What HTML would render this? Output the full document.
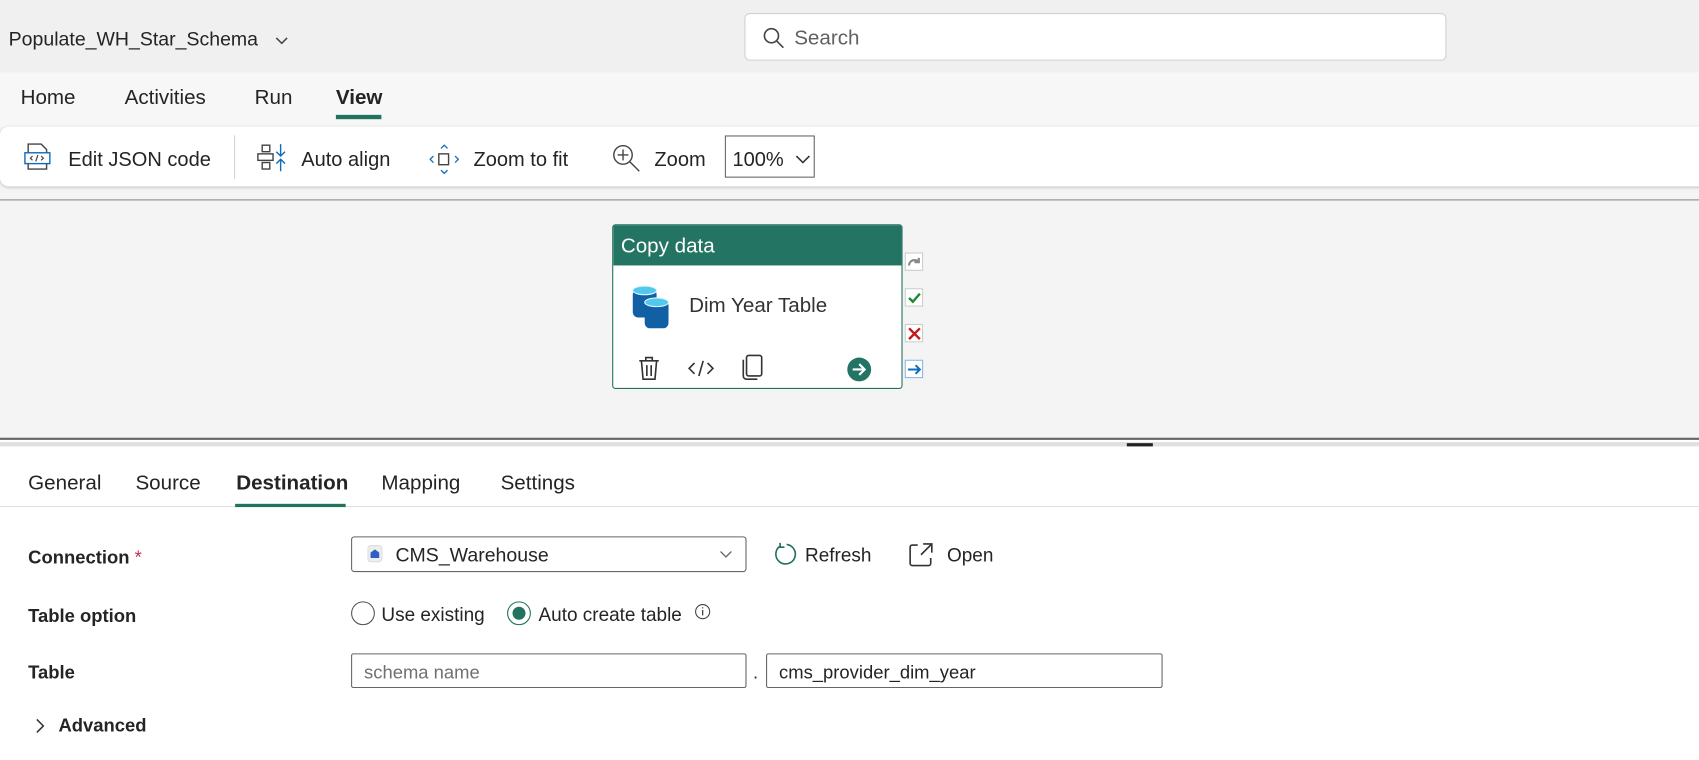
<!DOCTYPE html>
<html><head><meta charset="utf-8"><style>
*{box-sizing:border-box;margin:0;padding:0}
body{width:1699px;height:759px;overflow:hidden;font-family:"Segoe UI","Liberation Sans",sans-serif;color:#242424;background:#fff;position:relative}
#w{position:absolute;left:0;top:0;width:1568px;height:701px;transform:scale(1.0835);transform-origin:0 0}
.a{position:absolute}
.t{white-space:nowrap;margin-top:2px}
</style></head><body><div id="w">
<div class="a" style="left:0;top:0;width:1699px;height:117px;background:#f0f0f0"></div>
<div class="a" style="left:0;top:67px;width:1699px;height:50px;background:#f7f7f7"></div>
<div class="a" style="left:0;top:117px;width:1699px;height:288px;background:#f4f4f4"></div>
<div class="a" style="left:0;top:184px;width:1699px;height:1px;background:#8a8a8a"></div>
<div class="a t" style="left:8px;top:24px;font-size:18px">Populate_WH_Star_Schema</div>
<svg class="a" style="left:253px;top:32px" width="14" height="10"><path d="M2 3l5 5 5-5" fill="none" stroke="#444" stroke-width="1.4"/></svg>
<div class="a" style="left:687px;top:12px;width:648px;height:44px;background:#fff;border:1px solid #d1d1d1;border-radius:5px"></div>
<svg class="a" style="left:704px;top:25px" width="20" height="20"><circle cx="8" cy="8" r="6.5" fill="none" stroke="#444" stroke-width="1.5"/><path d="M13 13l6 6" stroke="#444" stroke-width="1.5"/></svg>
<div class="a t" style="left:733px;top:23px;font-size:19px;color:#616161">Search</div>
<div class="a t" style="left:19px;top:78px;font-size:19px">Home</div>
<div class="a t" style="left:115px;top:78px;font-size:19px">Activities</div>
<div class="a t" style="left:235px;top:78px;font-size:19px">Run</div>
<div class="a t" style="left:310px;top:78px;font-size:19px;font-weight:bold">View</div>
<div class="a" style="left:310px;top:106px;width:42px;height:4px;background:#217360"></div>
<div class="a" style="left:0;top:117px;width:1699px;height:55px;background:#fff;border-radius:8px;box-shadow:0 1px 3px rgba(0,0,0,.2)"></div>
<svg class="a" style="left:22px;top:131px" width="26" height="28"><path d="M4 2h12l5 5v18H4z" fill="none" stroke="#444" stroke-width="1.3"/><rect x="1" y="10" width="23" height="10" fill="#fff" stroke="#0f6cbd" stroke-width="1.3"/><path d="M8 13l-2 2 2 2M16 13l2 2-2 2M13 12l-2 6" fill="none" stroke="#444" stroke-width="1.1"/></svg>
<div class="a t" style="left:63px;top:134px;font-size:18.5px">Edit JSON code</div>
<div class="a" style="left:216px;top:125px;width:1px;height:40px;background:#d1d1d1"></div>
<svg class="a" style="left:236px;top:132px" width="30" height="28"><rect x="6" y="2" width="7" height="6" fill="none" stroke="#444" stroke-width="1.3"/><rect x="2" y="10" width="14" height="6" fill="none" stroke="#444" stroke-width="1.3"/><rect x="6" y="18" width="7" height="6" fill="none" stroke="#444" stroke-width="1.3"/><path d="M23 1v11M19 8l4 4 4-4M23 26V15M19 19l4-4 4 4" fill="none" stroke="#0f6cbd" stroke-width="1.3"/></svg>
<div class="a t" style="left:278px;top:134px;font-size:18.5px">Auto align</div>
<svg class="a" style="left:396px;top:133px" width="28" height="28"><rect x="9" y="9" width="9" height="10" fill="none" stroke="#444" stroke-width="1.3"/><path d="M11 4l3-3 3 3M11 24l3 3 3-3M4 11l-3 3 3 3M24 11l3 3-3 3" fill="none" stroke="#0f6cbd" stroke-width="1.2"/></svg>
<div class="a t" style="left:437px;top:134px;font-size:18.5px">Zoom to fit</div>
<svg class="a" style="left:564px;top:132px" width="28" height="28"><circle cx="11" cy="11" r="8.5" fill="none" stroke="#444" stroke-width="1.3"/><path d="M11 6v10M6 11h10M17 17l9 9" stroke="#444" stroke-width="1.3"/></svg>
<div class="a t" style="left:604px;top:134px;font-size:18.5px">Zoom</div>
<div class="a" style="left:669px;top:125px;width:83px;height:39px;border:1px solid #666;background:#fff"></div>
<div class="a t" style="left:676px;top:134px;font-size:18.5px">100%</div>
<svg class="a" style="left:734px;top:142px" width="14" height="10"><path d="M1 2l6 6 6-6" fill="none" stroke="#333" stroke-width="1.5"/></svg>
<div class="a" style="left:565px;top:207px;width:268px;height:152px;background:#fff;border:1px solid #217360;border-radius:3px;overflow:hidden">
<div style="height:37px;background:#237462;color:#fff;font-size:19px;padding:9px 7px 0">Copy data</div>
</div>
<svg class="a" style="left:583px;top:263px" width="38" height="42"><rect x="1" y="4" width="22" height="26" rx="5" fill="#1160a6"/><ellipse cx="12" cy="5" rx="11" ry="4" fill="#52c8ee" stroke="#e0f4fb"/><rect x="12" y="14" width="22" height="26" rx="5" fill="#1160a6"/><ellipse cx="23" cy="16" rx="11" ry="4" fill="#52c8ee" stroke="#e0f4fb"/></svg>
<div class="a t" style="left:636px;top:270px;font-size:19px;color:#333">Dim Year Table</div>
<svg class="a" style="left:588px;top:328px" width="22" height="24"><path d="M2 5h18M8 5V2h6v3M4 5l1.5 17h11L18 5M9 9v10M13 9v10" fill="none" stroke="#333" stroke-width="1.5"/></svg>
<svg class="a" style="left:635px;top:330px" width="24" height="20"><path d="M6 5L1 10l5 5M18 5l5 5-5 5M14 3l-4 14" fill="none" stroke="#333" stroke-width="1.5"/></svg>
<svg class="a" style="left:683px;top:327px" width="22" height="25"><rect x="6" y="1" width="14" height="19" rx="2" fill="none" stroke="#333" stroke-width="1.5"/><path d="M3 5v15a3 3 0 0 0 3 3h10" fill="none" stroke="#333" stroke-width="1.5"/></svg>
<svg class="a" style="left:781px;top:329px" width="24" height="24"><circle cx="12" cy="12" r="11" fill="#237462"/><path d="M6 12h11M12 7l5 5-5 5" fill="none" stroke="#fff" stroke-width="2"/></svg>
<div class="a" style="left:835px;top:233px;width:17px;height:17px;border:1px solid #ccc;background:#fff"></div>
<svg class="a" style="left:836px;top:234px" width="16" height="16"><path d="M3 11a5 5 0 0 1 9-3M12 4v4H8" fill="none" stroke="#888" stroke-width="2"/></svg>
<div class="a" style="left:835px;top:266px;width:17px;height:17px;border:1px solid #ccc;background:#fff"></div>
<svg class="a" style="left:836px;top:267px" width="16" height="16"><path d="M3 8l3.5 3.5L13 4" fill="none" stroke="#1c8a2c" stroke-width="2.2"/></svg>
<div class="a" style="left:835px;top:299px;width:17px;height:17px;border:1px solid #ccc;background:#fff"></div>
<svg class="a" style="left:836px;top:300px" width="16" height="16"><path d="M3 3l10 10M13 3L3 13" stroke="#c0181c" stroke-width="2.2"/></svg>
<div class="a" style="left:835px;top:332px;width:17px;height:17px;border:1px solid #8ab6e6;background:#fff"></div>
<svg class="a" style="left:836px;top:333px" width="16" height="16"><path d="M2 8h11M9 4l4 4-4 4" fill="none" stroke="#0f6cbd" stroke-width="1.8"/></svg>
<div class="a" style="left:0;top:404px;width:1699px;height:2px;background:#666"></div>
<div class="a" style="left:0;top:408px;width:1699px;height:4px;background:#e0e0e0"></div>
<div class="a" style="left:1040px;top:409px;width:24px;height:3px;background:#222"></div>
<div class="a t" style="left:26px;top:434px;font-size:19px">General</div>
<div class="a t" style="left:125px;top:434px;font-size:19px">Source</div>
<div class="a t" style="left:218px;top:434px;font-size:19px;font-weight:bold">Destination</div>
<div class="a t" style="left:352px;top:434px;font-size:19px">Mapping</div>
<div class="a t" style="left:462px;top:434px;font-size:19px">Settings</div>
<div class="a" style="left:0;top:467px;width:1699px;height:1px;background:#e0e0e0"></div>
<div class="a" style="left:217px;top:465px;width:102px;height:3px;background:#217360"></div>
<div class="a t" style="left:26px;top:503px;font-size:17px;font-weight:bold">Connection <span style="color:#c4314b;font-weight:normal">*</span></div>
<div class="a" style="left:324px;top:495px;width:365px;height:33px;border:1px solid #666;border-radius:3px"></div>
<svg class="a" style="left:339px;top:503px" width="14" height="16"><rect x="0.5" y="0.5" width="13" height="15" rx="3" fill="#eee" stroke="#ddd"/><path d="M3 12V7l4-3 4 3v5z" fill="#2f5fc6"/></svg>
<div class="a t" style="left:365px;top:500px;font-size:18px">CMS_Warehouse</div>
<svg class="a" style="left:664px;top:508px" width="12" height="8"><path d="M1 1l5 5 5-5" fill="none" stroke="#666" stroke-width="1.2"/></svg>
<svg class="a" style="left:713px;top:500px" width="24" height="24"><path d="M7 4a9 9 0 1 0 6-1.5M7 1v4h4" fill="none" stroke="#1f6f63" stroke-width="1.5"/></svg>
<div class="a t" style="left:743px;top:500px;font-size:17.5px">Refresh</div>
<svg class="a" style="left:838px;top:500px" width="24" height="24"><path d="M9 3H4a2 2 0 0 0-2 2v15a2 2 0 0 0 2 2h15a2 2 0 0 0 2-2v-5M14 2h8v8M22 2l-10 10" fill="none" stroke="#333" stroke-width="1.5"/></svg>
<div class="a t" style="left:874px;top:500px;font-size:17.5px">Open</div>
<div class="a t" style="left:26px;top:557px;font-size:17px;font-weight:bold">Table option</div>
<div class="a" style="left:324px;top:555px;width:22px;height:22px;border:1px solid #555;border-radius:50%"></div>
<div class="a t" style="left:352px;top:555px;font-size:17.5px">Use existing</div>
<div class="a" style="left:468px;top:555px;width:22px;height:22px;border:1px solid #217360;border-radius:50%"></div>
<div class="a" style="left:473px;top:560px;width:12px;height:12px;background:#217360;border-radius:50%"></div>
<div class="a t" style="left:497px;top:555px;font-size:17.5px">Auto create table</div>
<svg class="a" style="left:641px;top:557px" width="15" height="15"><circle cx="7.5" cy="7.5" r="6.5" fill="none" stroke="#444"/><path d="M7.5 6v5M7.5 3.5v1" stroke="#444" stroke-width="1.2"/></svg>
<div class="a t" style="left:26px;top:609px;font-size:17px;font-weight:bold">Table</div>
<div class="a" style="left:324px;top:603px;width:365px;height:32px;border:1px solid #666;border-radius:2px"></div>
<div class="a t" style="left:336px;top:609px;font-size:17px;color:#707070">schema name</div>
<div class="a t" style="left:695px;top:609px;font-size:17px">.</div>
<div class="a" style="left:707px;top:603px;width:366px;height:32px;border:1px solid #666;border-radius:2px"></div>
<div class="a t" style="left:719px;top:609px;font-size:17px">cms_provider_dim_year</div>
<svg class="a" style="left:32px;top:663px" width="10" height="14"><path d="M2 1l6 6-6 6" fill="none" stroke="#333" stroke-width="1.4"/></svg>
<div class="a t" style="left:54px;top:658px;font-size:17px;font-weight:bold">Advanced</div>
</div></body></html>
